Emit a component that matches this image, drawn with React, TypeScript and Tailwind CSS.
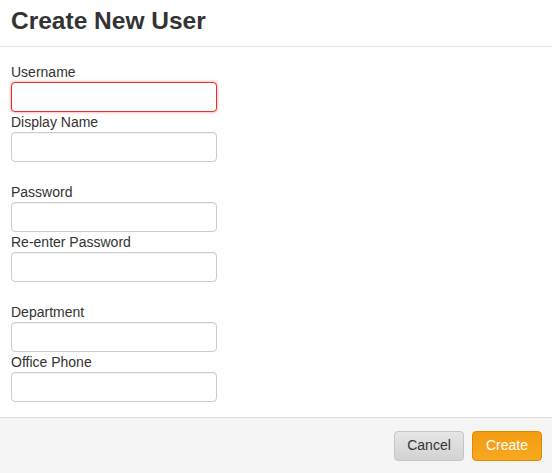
import * as React from "react";

function Field({ label, error }: { label: string; error?: boolean }) {
  return (
    <div className="flex flex-col">
      <label className="h-5 text-[14px] leading-5 text-[#333]">{label}</label>
      <input
        type="text"
        className={`h-[30px] w-[206px] rounded-[4px] border bg-white px-2 text-[14px] outline-none ${
          error
            ? "border-[#e8302f] shadow-[0_0_3px_rgba(232,48,47,0.6)]"
            : "border-[#ccc] shadow-[inset_0_1px_1px_rgba(0,0,0,0.05)]"
        }`}
      />
    </div>
  );
}

export default function App() {
  return (
    <div className="flex h-[473px] w-[552px] flex-col bg-white font-['Liberation_Sans',Arial,sans-serif] text-[#333]">
      <div className="h-[47px] border-b border-[#e5e5e5] px-[11px] pt-[6px]">
        <h1 className="text-[24.5px] font-bold leading-[30px] text-[#333]">Create New User</h1>
      </div>
      <div className="flex flex-1 flex-col gap-5 px-[11px] pt-[15px]">
        <div className="flex flex-col">
          <Field label="Username" error />
          <Field label="Display Name" />
        </div>
        <div className="flex flex-col">
          <Field label="Password" />
          <Field label="Re-enter Password" />
        </div>
        <div className="flex flex-col">
          <Field label="Department" />
          <Field label="Office Phone" />
        </div>
      </div>
      <div className="flex h-[56px] items-center justify-end gap-[8px] border-t border-[#ddd] bg-[#f5f5f5] pl-[11px] pr-[10px]">
        <button className="h-[30px] w-[70px] rounded-[4px] border border-[#c5c5c5] bg-gradient-to-b from-[#e6e6e6] to-[#d2d2d2] text-[14px] text-[#333]">
          Cancel
        </button>
        <button className="h-[30px] w-[70px] rounded-[4px] border border-[#e08a00] bg-gradient-to-b from-[#f39c12] to-[#f7a81f] text-[14px] text-white">
          Create
        </button>
      </div>
    </div>
  );
}
